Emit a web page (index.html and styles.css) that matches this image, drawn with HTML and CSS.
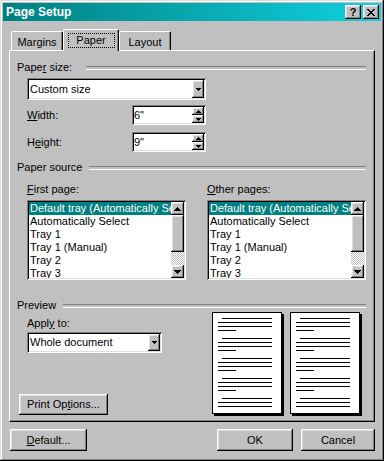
FILE: index.html
```html
<!DOCTYPE html>
<html lang="en">
<head>
  <meta charset="UTF-8" />
  <title>Page Setup</title>
  <link rel="stylesheet" href="styles.css">
</head>
<body>
  <svg class="defs" width="0" height="0">
    <symbol id="page-lines" viewBox="0 0 68 100">
      <path d="M9 5h50v1H9zM5 9h54v1H5zM5 13h54v1H5zM5 17h18v1H5z
               M9 25h50v1H9zM5 29h54v1H5zM5 33h54v1H5zM5 37h18v1H5z
               M9 45h50v1H9zM5 49h54v1H5zM5 53h54v1H5zM5 57h18v1H5z
               M9 65h50v1H9zM5 69h54v1H5zM5 73h54v1H5zM5 77h18v1H5z
               M9 85h50v1H9zM5 89h54v1H5zM5 93h54v1H5z"/>
    </symbol>
    <symbol id="up7" viewBox="0 0 7 4"><path d="M3 0h1v1h1v1h1v1h1v1H0V3h1V2h1V1h1z"/></symbol>
    <symbol id="down7" viewBox="0 0 7 4"><path d="M0 0h7v1H6v1H5v1H4v1H3V3H2V2H1V1H0z"/></symbol>
    <symbol id="up5" viewBox="0 0 5 3"><path d="M2 0h1v1h1v1h1v1H0V2h1V1h1z"/></symbol>
    <symbol id="down5" viewBox="0 0 5 3"><path d="M0 0h5v1H4v1H3v1H2V2H1V1H0z"/></symbol>
  </svg>

  <div class="window">
    <div class="titlebar">
      <span class="title">Page Setup</span>
      <div class="title-btns">
        <div class="raised tbtn">?</div>
        <div class="raised tbtn">
          <svg width="8" height="7" viewBox="0 0 8 7"><path d="M0 0h2v1H0zM6 0h2v1H6zM1 1h2v1H1zM5 1h2v1H5zM2 2h4v1H2zM3 3h2v1H3zM2 4h4v1H2zM1 5h2v1H1zM5 5h2v1H5zM0 6h2v1H0zM6 6h2v1H6z"/></svg>
        </div>
      </div>
    </div>

    <div class="dialog">
      <div class="tabs">
        <div class="tab tab-margins">Margins</div>
        <div class="tab tab-paper active"><span class="focus">Paper</span></div>
        <div class="tab tab-layout">Layout</div>
      </div>

      <div class="panel">
        <!-- paper size -->
        <div class="group-head head-size"><span>Pape<u>r</u> size:</span></div>
        <div class="indent">
          <div class="sunken combo combo-size">
            <span class="value">Custom size</span>
            <span class="raised drop"><svg width="5" height="3"><use href="#down5"/></svg></span>
          </div>
          <div class="field-row row-width">
            <span class="field-label"><u>W</u>idth:</span>
            <div class="sunken spin">
              <span class="value">6"</span>
              <span class="spin-btns">
                <span class="raised spin-btn"><svg width="5" height="3"><use href="#up5"/></svg></span>
                <span class="raised spin-btn"><svg width="5" height="3"><use href="#down5"/></svg></span>
              </span>
            </div>
          </div>
          <div class="field-row row-height">
            <span class="field-label">H<u>e</u>ight:</span>
            <div class="sunken spin">
              <span class="value">9"</span>
              <span class="spin-btns">
                <span class="raised spin-btn"><svg width="5" height="3"><use href="#up5"/></svg></span>
                <span class="raised spin-btn"><svg width="5" height="3"><use href="#down5"/></svg></span>
              </span>
            </div>
          </div>
        </div>

        <!-- paper source -->
        <div class="group-head head-source"><span>Paper source</span></div>
        <div class="indent sources">
          <div class="source-col">
            <span><u>F</u>irst page:</span>
            <div class="sunken listbox">
              <div class="items">
                <div class="item sel">Default tray (Automatically Select)</div>
                <div class="item">Automatically Select</div>
                <div class="item">Tray 1</div>
                <div class="item">Tray 1 (Manual)</div>
                <div class="item">Tray 2</div>
                <div class="item">Tray 3</div>
              </div>
              <div class="scroll">
                <span class="raised sb-btn"><svg width="7" height="4"><use href="#up7"/></svg></span>
                <span class="raised thumb"></span>
                <span class="track"></span>
                <span class="raised sb-btn"><svg width="7" height="4"><use href="#down7"/></svg></span>
              </div>
            </div>
          </div>
          <div class="source-col">
            <span><u>O</u>ther pages:</span>
            <div class="sunken listbox">
              <div class="items">
                <div class="item sel">Default tray (Automatically Select)</div>
                <div class="item">Automatically Select</div>
                <div class="item">Tray 1</div>
                <div class="item">Tray 1 (Manual)</div>
                <div class="item">Tray 2</div>
                <div class="item">Tray 3</div>
              </div>
              <div class="scroll">
                <span class="raised sb-btn"><svg width="7" height="4"><use href="#up7"/></svg></span>
                <span class="raised thumb"></span>
                <span class="track"></span>
                <span class="raised sb-btn"><svg width="7" height="4"><use href="#down7"/></svg></span>
              </div>
            </div>
          </div>
        </div>

        <!-- preview -->
        <div class="group-head head-preview"><span>Preview</span></div>
        <div class="preview">
          <div class="preview-left">
            <span class="apply-label">Appl<u>y</u> to:</span>
            <div class="sunken combo combo-apply">
              <span class="value">Whole document</span>
              <span class="raised drop"><svg width="5" height="3"><use href="#down5"/></svg></span>
            </div>
            <div class="raised btn print-btn"><span>Print Op<u>t</u>ions...</span></div>
          </div>
          <div class="pages">
            <div class="page"><svg width="68" height="100"><use href="#page-lines"/></svg></div>
            <div class="page"><svg width="68" height="100"><use href="#page-lines"/></svg></div>
          </div>
        </div>
      </div>

      <div class="footer">
        <div class="raised btn btn-default"><span><u>D</u>efault...</span></div>
        <div class="spacer"></div>
        <div class="raised btn btn-ok">OK</div>
        <div class="raised btn btn-cancel">Cancel</div>
      </div>
    </div>
  </div>
</body>
</html>
```

FILE: styles.css
```css
* { margin: 0; padding: 0; box-sizing: border-box; }
html, body {
  width: 384px;
  height: 461px;
  overflow: hidden;
  background: #c0c0c0;
}
body {
  font-family: "Liberation Sans", Arial, sans-serif;
  font-size: 11px;
  line-height: 13px;
  color: #000;
}
.defs { position: absolute; }
svg { display: block; shape-rendering: crispEdges; fill: #000; }

/* 3d edges */
.raised {
  background: #c0c0c0;
  box-shadow: inset -1px -1px #000, inset 1px 1px #fff, inset -2px -2px #808080, inset 2px 2px #dfdfdf;
}
.sunken {
  background: #fff;
  padding: 2px;
  box-shadow: inset 1px 1px #808080, inset -1px -1px #fff, inset 2px 2px #000, inset -2px -2px #dfdfdf;
}

.window {
  width: 384px;
  height: 461px;
  padding: 3px;
  display: flex;
  flex-direction: column;
  background: #c0c0c0;
  box-shadow: inset -1px -1px #000, inset 1px 1px #dfdfdf, inset -2px -2px #808080, inset 2px 2px #fff;
}
.titlebar {
  height: 18px;
  display: flex;
  align-items: center;
  justify-content: space-between;
  padding: 0 2px 0 3px;
  background: linear-gradient(90deg, #008080, #10d0e0);
  color: #fff;
  font-weight: bold;
  font-size: 12px;
}
.title-btns { display: flex; gap: 2px; }
.tbtn {
  width: 16px;
  height: 14px;
  display: flex;
  align-items: center;
  justify-content: center;
  color: #000;
  font-size: 11px;
  font-weight: bold;
}

.dialog { padding: 8px 6px 0; }

/* tabs */
.tabs {
  height: 21px;
  display: flex;
  align-items: flex-end;
  padding-left: 2px;
}
.tab {
  height: 19px;
  padding-top: 4px;
  text-align: center;
  border-top: 1px solid #fff;
  border-left: 1px solid #fff;
  border-right: 1px solid #000;
  border-radius: 2px 2px 0 0;
  box-shadow: inset -1px 0 #808080;
}
.tab-margins { width: 52px; }
.tab-paper { width: 56px; }
.tab-layout { width: 52px; }
.tab.active {
  height: 22px;
  margin-bottom: -1px;
  padding-top: 3px;
  position: relative;
  z-index: 1;
  background: #c0c0c0;
}
.focus {
  display: block;
  width: 47px;
  height: 15px;
  margin: 0 auto;
  border: 1px dotted #000;
}

.panel {
  height: 372px;
  display: flex;
  flex-direction: column;
  padding: 10px 8px 6px 7px;
  border: 1px solid;
  border-color: #fff #000 #000 #fff;
  box-shadow: inset -1px -1px #808080;
}
.group-head {
  display: flex;
  align-items: center;
}
.group-head::after {
  content: "";
  flex: 1;
  height: 2px;
  margin-left: 7px;
  border-top: 1px solid #808080;
  border-bottom: 1px solid #fff;
}
.head-size::after { margin-left: 14px; }
.head-source { margin-top: 9px; }
.head-preview { margin-top: 19px; }
.indent { padding-left: 10px; }

/* combo / spin */
.combo {
  display: flex;
  align-items: center;
}
.combo .value { flex: 1; padding-left: 1px; }
.combo .drop {
  width: 12px;
  align-self: stretch;
  display: flex;
  align-items: center;
  justify-content: center;
}
.combo-size { width: 179px; height: 22px; margin-top: 4px; }
.combo-apply { width: 135px; height: 21px; margin: 2px 0 0 10px; }

.field-row {
  display: flex;
  align-items: center;
  height: 20px;
}
.row-width { margin-top: 5px; }
.row-height { margin-top: 7px; }
.field-label { width: 105px; }
.spin {
  width: 74px;
  height: 20px;
  display: flex;
  align-items: center;
}
.spin .value { flex: 1; }
.spin-btns {
  width: 12px;
  align-self: stretch;
  display: flex;
  flex-direction: column;
}
.spin-btn {
  flex: 1;
  display: flex;
  align-items: center;
  justify-content: center;
}

/* list boxes */
.sources {
  display: flex;
  gap: 21px;
  margin-top: 9px;
}
.source-col {
  width: 159px;
  display: flex;
  flex-direction: column;
  gap: 4px;
}
.listbox {
  height: 80px;
  display: flex;
}
.items {
  flex: 1;
  overflow: hidden;
}
.item {
  height: 13px;
  padding-left: 1px;
  white-space: nowrap;
}
.item.sel { background: #008080; color: #fff; }
.scroll {
  width: 13px;
  display: flex;
  flex-direction: column;
}
.sb-btn {
  height: 13px;
  display: flex;
  align-items: center;
  justify-content: center;
}
.thumb { height: 37px; }
.track {
  flex: 1;
  background: repeating-conic-gradient(#c0c0c0 0 25%, #fff 0 50%) 0 0 / 2px 2px;
}

/* preview */
.preview {
  flex: 1;
  display: flex;
}
.preview-left {
  width: 195px;
  display: flex;
  flex-direction: column;
}
.apply-label { margin: 5px 0 0 10px; }
.btn {
  display: flex;
  align-items: center;
  justify-content: center;
}
.print-btn {
  width: 89px;
  height: 21px;
  margin: auto 0 0 2px;
}
.pages {
  display: flex;
  gap: 8px;
  align-items: flex-start;
}
.page {
  width: 70px;
  height: 102px;
  background: #fff;
  border: 1px solid #000;
  box-shadow: 2px 2px 0 #000;
}

.footer {
  display: flex;
  margin-top: 7px;
  padding-left: 1px;
}
.footer .btn { height: 22px; }
.btn-default { width: 77px; }
.spacer { flex: 1; }
.btn-ok { width: 76px; }
.btn-cancel { width: 74px; margin-left: 8px; }
```
